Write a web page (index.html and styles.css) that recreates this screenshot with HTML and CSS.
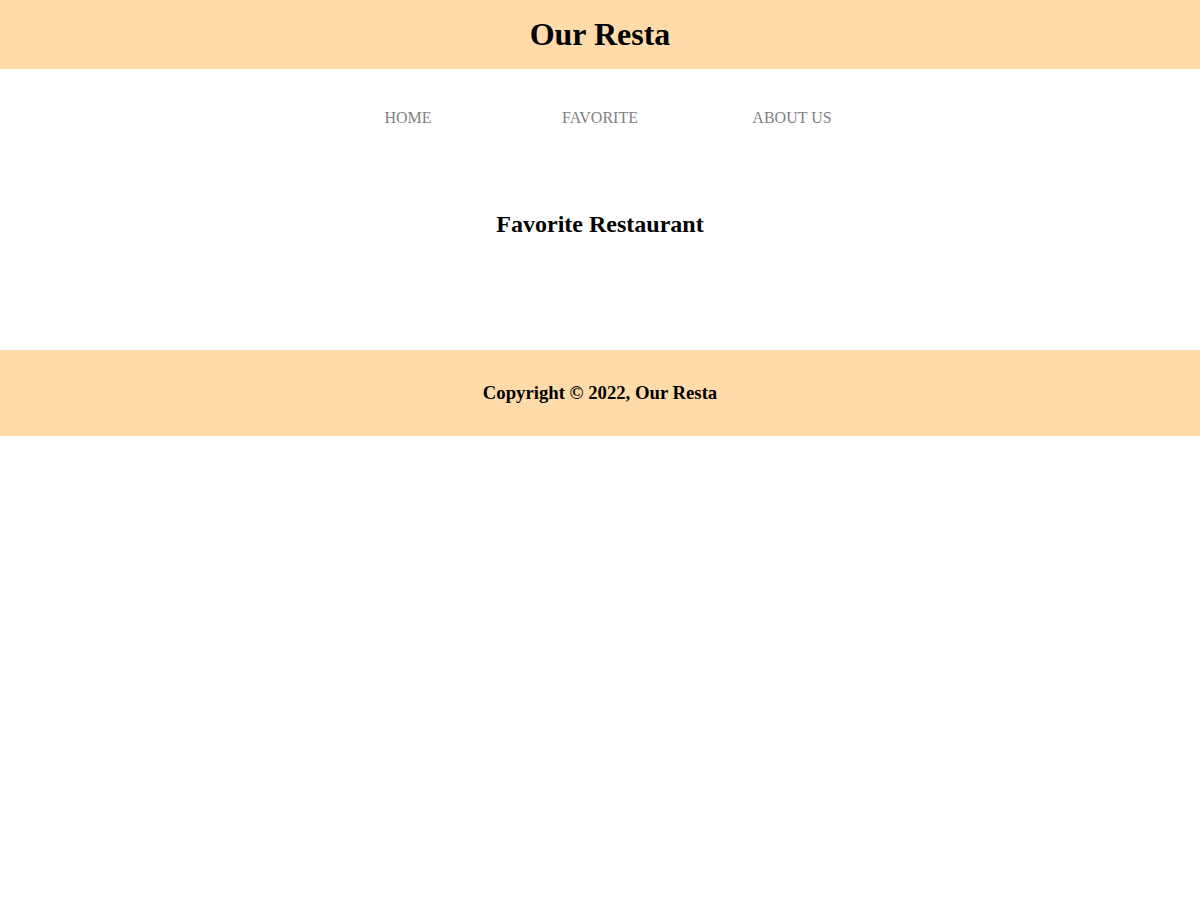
FILE: index.html
```html
<!DOCTYPE html>
<html lang="en">
<head>
<meta charset="utf-8">
<title>Our Resta</title>
<link rel="stylesheet" href="styles.css">
</head>
<body>
<header class="app-bar">
  <h1 class="app-bar__title">Our Resta</h1>
</header>
<nav class="nav">
  <ul class="nav__list">
    <li class="nav__item"><a class="nav__link" href="#">HOME</a></li>
    <li class="nav__item"><a class="nav__link" href="#">FAVORITE</a></li>
    <li class="nav__item"><a class="nav__link" href="#">ABOUT US</a></li>
  </ul>
</nav>
<main class="content">
  <h2 class="content__heading">Favorite Restaurant</h2>
</main>
<footer class="footer">
  <p class="footer__text">Copyright © 2022, Our Resta</p>
</footer>
</body>
</html>
```

FILE: styles.css
```css
* {
  box-sizing: border-box;
}

body {
  margin: 0;
  font-family: "Liberation Serif", "Times New Roman", serif;
  background: #ffffff;
  color: #000000;
}

.app-bar {
  background: #ffdbaa;
  height: 69px;
  display: flex;
  align-items: center;
  justify-content: center;
}

.app-bar__title {
  margin: 0;
  font-size: 32px;
  font-weight: bold;
  line-height: 37px;
}

.nav__list {
  list-style: none;
  margin: 0;
  padding: 40px 0 0;
  display: flex;
  justify-content: center;
}

.nav__item {
  width: 192px;
  text-align: center;
  line-height: 18px;
}

.nav__link {
  color: #7f7f7f;
  text-decoration: none;
  font-size: 16px;
}

.content {
  height: 223px;
  padding-top: 83px;
}

.content__heading {
  margin: 0;
  text-align: center;
  font-size: 24px;
  line-height: 28px;
  font-weight: bold;
}

.footer {
  background: #ffdbaa;
  height: 86px;
  display: flex;
  align-items: center;
  justify-content: center;
}

.footer__text {
  margin: 0;
  font-size: 18.72px;
  font-weight: bold;
  line-height: 22px;
}
```
